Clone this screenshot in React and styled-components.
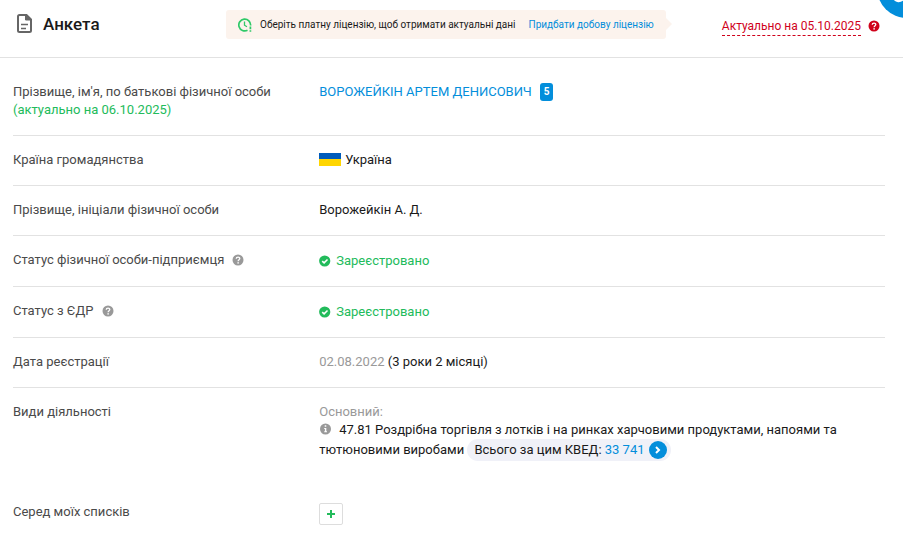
import React from 'react'
import styled, { createGlobalStyle } from 'styled-components'

const GlobalStyle = createGlobalStyle`
  * {
    box-sizing: border-box;
  }
  body {
    margin: 0;
    background-color: #fff;
    color: #1a1a1a;
    font-family: Roboto, "Liberation Sans", sans-serif;
    font-size: 13px;
    line-height: 18px;
    overflow-x: hidden;
  }
`

const Page = styled.main`
  position: relative;
  overflow: hidden;
  padding-bottom: 10px;
`

const Header = styled.header`
  display: flex;
  align-items: center;
  height: 58px;
  padding: 0 23px 8px 14px;
  border-bottom: 1px solid #e2e2e2;
`

const Title = styled.h1`
  display: flex;
  align-items: center;
  gap: 7px;
  width: 212px;
  margin: 0;
  padding-bottom: 2px;
  font-size: 17px;
  font-weight: 500;
  line-height: 24px;
`

const Banner = styled.div`
  position: relative;
  display: flex;
  align-items: center;
  gap: 8px;
  height: 29px;
  padding: 0 12px;
  border-radius: 3px;
  background-color: #fcf3ed;
  font-size: 10px;
  white-space: nowrap;

  &::after {
    content: "";
    position: absolute;
    left: 100%;
    top: 8px;
    border: 6px solid transparent;
    border-left-color: #fcf3ed;
    border-right-width: 0;
  }
`

const Link = styled.a`
  color: #038edb;
  text-decoration: none;
`

const BannerLink = styled(Link)`
  margin-left: 5px;
`

const Actual = styled.div`
  display: flex;
  align-items: center;
  gap: 7px;
  margin-left: auto;
  padding-top: 3px;
`

const ActualDate = styled.span`
  border-bottom: 1px dashed #d0021b;
  color: #d0021b;
  font-size: 12px;
`

const IconButton = styled.button`
  display: inline-flex;
  padding: 0;
  border: 0;
  background: none;
  cursor: pointer;
`

const CornerButton = styled(IconButton)`
  position: absolute;
  top: -42px;
  right: -34px;
  width: 60px;
  height: 60px;
  border-radius: 50%;
  background-color: #038edb;
`

const List = styled.dl`
  margin: 0;
  padding: 10px 18px 0 13px;
`

const Row = styled.div`
  display: flex;
  padding: 15px 0 ${props => (props.$last ? '26px' : '16px')};
  border-bottom: 1px solid ${props => (props.$last ? 'transparent' : '#e2e2e2')};
`

const Label = styled.dt`
  flex: 0 0 35%;
  color: #4a4a4a;
`

const Value = styled.dd`
  flex: 1;
  min-width: 0;
  margin: 0;
  padding: 0 20px 0 1px;
`

const LabelHelp = styled(IconButton)`
  margin-left: 8px;
  vertical-align: -2px;
`

const Green = styled.span`
  color: #22bb5b;
`

const Muted = styled.span`
  color: #999;
`

const Count = styled.span`
  display: inline-block;
  margin-left: 8px;
  padding: 0 4px;
  border-radius: 3px;
  background-color: #038edb;
  color: #fff;
  font-size: 10px;
  font-weight: 700;
  vertical-align: top;
`

const Country = styled.span`
  display: flex;
  align-items: center;
  gap: 4px;
`

const Status = styled.span`
  display: flex;
  align-items: center;
  gap: 5px;
  padding-top: 1px;
  color: #22bb5b;
`

const InfoButton = styled(IconButton)`
  margin-right: 7px;
  vertical-align: -1px;
`

const Total = styled.span`
  display: inline-flex;
  align-items: center;
  gap: 4px;
  height: 22px;
  padding: 0 4px 0 7px;
  border-radius: 11px;
  background-color: #f0f1f8;
`

const Arrow = styled(Link)`
  display: inline-flex;
  align-items: center;
  justify-content: center;
  width: 18px;
  height: 18px;
  border-radius: 50%;
  background-color: #038edb;
`

const AddButton = styled.button`
  display: flex;
  align-items: center;
  justify-content: center;
  width: 24px;
  height: 22px;
  padding: 0;
  border: 1px solid #ddd;
  border-radius: 2px;
  background-color: #fff;
  cursor: pointer;
`

function DocumentIcon() {
  return (
    <svg width="22" height="22" viewBox="0 0 22 22" fill="none" stroke="#666" strokeWidth="2">
      <path d="M12.500 2H5.500Q4 2 4 3.500V17.500Q4 19 5.500 19H15.500Q17 19 17 17.500V6.500Z" />
      <path d="M11.500 2V7H17Z" fill="#666" strokeWidth="1" />
      <path d="M7 11.500H14M7 15.500H12" strokeWidth="1.500" />
    </svg>
  )
}

function ClockIcon() {
  return (
    <svg width="14" height="14" viewBox="0 0 14 14" fill="none" stroke="#2fc968" strokeWidth="1.700">
      <path d="M12.600 7.500A5.900 5.900 0 1 0 9.500 12.200" />
      <path d="M6.500 3.500V7.200L9 8.700" strokeWidth="1.300" />
      <path d="M12.400 8.500V11.200M12.400 12.200V13.700" />
    </svg>
  )
}

function HelpIcon({ color }) {
  return (
    <svg width="12" height="12" viewBox="0 0 12 12" fill="none">
      <circle cx="6" cy="6" r="5.500" fill={color} />
      <path d="M4.200 4.700C4.300 2.600 7.900 2.600 7.800 4.600C7.800 5.700 6.100 5.700 6.100 7.200" stroke="#fff" strokeWidth="1.300" />
      <circle cx="6.100" cy="8.900" r="0.800" fill="#fff" />
    </svg>
  )
}

function InfoIcon() {
  return (
    <svg width="13" height="12" viewBox="0 0 13 12">
      <circle cx="6.500" cy="6" r="5.500" fill="#999" />
      <path d="M5.700 2.300H7.300V3.800H5.700ZM5.200 5H7.300V8.200H8V9.300H5.200V8.200H5.900V6H5.200Z" fill="#fff" />
    </svg>
  )
}

function CheckIcon() {
  return (
    <svg width="12" height="12" viewBox="0 0 12 12" fill="none">
      <circle cx="5.700" cy="6" r="5.600" fill="#22bb5b" />
      <path d="M3.200 6.100L5.100 7.900L8.500 4.500" stroke="#fff" strokeWidth="1.500" />
    </svg>
  )
}

function FlagIcon() {
  return (
    <svg width="22" height="14" viewBox="0 0 22 14">
      <path d="M0 0H22V6H0Z" fill="#005bbb" />
      <path d="M0 6H22V13H0Z" fill="#ffd500" />
    </svg>
  )
}

function RegisteredStatus() {
  return (
    <Status>
      <CheckIcon />
      Зареєстровано
    </Status>
  )
}

export default function App() {
  return (
    <Page>
      <GlobalStyle />
      <Header>
        <Title>
          <DocumentIcon />
          Анкета
        </Title>
        <Banner>
          <ClockIcon />
          <span>Оберіть платну ліцензію, щоб отримати актуальні дані</span>
          <BannerLink href="#license">Придбати добову ліцензію</BannerLink>
        </Banner>
        <Actual>
          <ActualDate>Актуально на 05.10.2025</ActualDate>
          <IconButton type="button" aria-label="Довідка">
            <HelpIcon color="#d0021b" />
          </IconButton>
        </Actual>
      </Header>
      <CornerButton type="button" aria-label="Чат">
        <svg width="60" height="60" viewBox="0 0 60 60" fill="none">
          <path d="M17 40Q21 45 26 41" stroke="#fff" strokeWidth="3" />
        </svg>
      </CornerButton>
      <List>
        <Row>
          <Label>
            Прізвище, ім'я, по батькові фізичної особи
            <br />
            <Green>(актуально на 06.10.2025)</Green>
          </Label>
          <Value>
            <Link href="#person">ВОРОЖЕЙКІН АРТЕМ ДЕНИСОВИЧ</Link>
            <Count>5</Count>
          </Value>
        </Row>
        <Row>
          <Label>Країна громадянства</Label>
          <Value>
            <Country>
              <FlagIcon />
              Україна
            </Country>
          </Value>
        </Row>
        <Row>
          <Label>Прізвище, ініціали фізичної особи</Label>
          <Value>Ворожейкін А. Д.</Value>
        </Row>
        <Row>
          <Label>
            Статус фізичної особи-підприємця
            <LabelHelp type="button" aria-label="Довідка">
              <HelpIcon color="#999" />
            </LabelHelp>
          </Label>
          <Value>
            <RegisteredStatus />
          </Value>
        </Row>
        <Row>
          <Label>
            Статус з ЄДР
            <LabelHelp type="button" aria-label="Довідка">
              <HelpIcon color="#999" />
            </LabelHelp>
          </Label>
          <Value>
            <RegisteredStatus />
          </Value>
        </Row>
        <Row>
          <Label>Дата реєстрації</Label>
          <Value>
            <Muted>02.08.2022</Muted> (3 роки 2 місяці)
          </Value>
        </Row>
        <Row $last>
          <Label>Види діяльності</Label>
          <Value>
            <Muted>Основний:</Muted>
            <br />
            <InfoButton type="button" aria-label="Інформація">
              <InfoIcon />
            </InfoButton>
            47.81 Роздрібна торгівля з лотків і на ринках харчовими продуктами, напоями та
            тютюновими виробами{' '}
            <Total>
              <span>
                Всього за цим КВЕД: <Link href="#kved">33 741</Link>
              </span>
              <Arrow href="#kved" aria-label="Перейти">
                <svg width="8" height="8" viewBox="0 0 8 8" fill="none" stroke="#fff" strokeWidth="2">
                  <path d="M2 1L5 4L2 7" />
                </svg>
              </Arrow>
            </Total>
          </Value>
        </Row>
        <Row $last>
          <Label>Серед моїх списків</Label>
          <Value>
            <AddButton type="button" aria-label="Додати до списку">
              <svg width="10" height="10" viewBox="0 0 10 10" stroke="#22bb5b" strokeWidth="2">
                <path d="M5 1V9M1 5H9" />
              </svg>
            </AddButton>
          </Value>
        </Row>
      </List>
    </Page>
  )
}
